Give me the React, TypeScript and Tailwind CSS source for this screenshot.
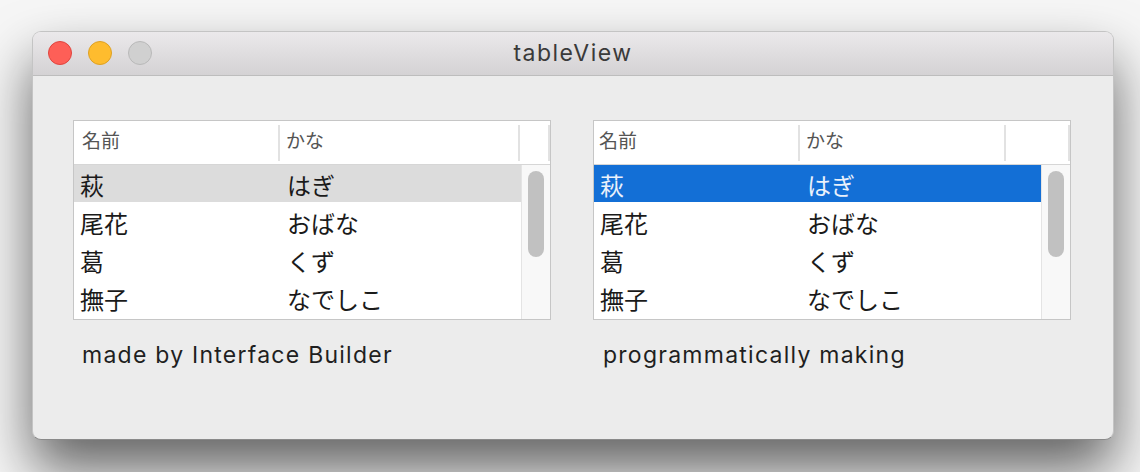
const rows = [
  { name: '萩', kana: 'はぎ' },
  { name: '尾花', kana: 'おばな' },
  { name: '葛', kana: 'くず' },
  { name: '撫子', kana: 'なでしこ' },
];

const font = { fontFamily: 'Inter, "Noto Sans CJK JP", sans-serif' };

function Table({ variant }: { variant: 'ib' | 'code' }) {
  const isCode = variant === 'code';
  return (
    <div className="w-[478px] h-[200px] border border-[#c6c6c6] bg-white flex flex-col">
      {/* header */}
      <div className="h-[44px] flex items-center border-b border-[#d6d6d6] text-[19px] text-[#555]">
        <div className={`w-[206px] h-[36px] flex items-center ${isCode ? 'pl-[5px]' : 'pl-[8px]'} border-r-2 border-[#e2e2e2]`}>
          名前
        </div>
        <div className={`${isCode ? 'w-[206px]' : 'w-[240px]'} h-[36px] flex items-center pl-[6px] border-r-2 border-[#e2e2e2]`}>
          かな
        </div>
        <div className="flex-1 h-[36px] border-r-2 border-[#e2e2e2]" />
      </div>
      {/* body */}
      <div className="flex-1 flex min-h-0">
        <div className="w-[447px] flex flex-col">
          {rows.map((r, i) => {
            const sel = i === 0;
            const bg = sel ? (isCode ? 'bg-[#136fd6] text-[#eaf1fb]' : 'bg-[#dcdcdc] text-[#1a1a1a]') : 'text-[#1a1a1a]';
            return (
              <div key={r.name} className="h-[38px] shrink-0">
                <div className={`h-[37px] flex items-center pt-[7px] text-[24px] leading-none ${bg}`}>
                  <div className="w-[207px] pl-[6px]">{r.name}</div>
                  <div className="pl-[6px]">{r.kana}</div>
                </div>
              </div>
            );
          })}
        </div>
        <div className="flex-1 bg-[#f8f8f8] border-l border-[#e4e4e4] pt-[6px] pl-[6px]">
          <div className="w-[16px] h-[86px] rounded-full bg-[#c1c1c1]" />
        </div>
      </div>
    </div>
  );
}

export default function App() {
  return (
    <div className="w-[1140px] h-[472px] bg-[#f6f6f6] pt-[31px] pl-[32px] overflow-hidden" style={font}>
      <div className="w-[1082px] h-[409px] rounded-[9px] bg-[#ececec] border border-[#c4c4c4] border-b-[#8a8a8a] shadow-[0_30px_55px_rgba(0,0,0,0.6)] overflow-hidden flex flex-col">
        {/* title bar */}
        <div className="h-[44px] shrink-0 relative flex items-center justify-center bg-gradient-to-b from-[#ebe9eb] to-[#d4d2d4] border-b border-[#bdbdbd]">
          <div className="absolute left-[15px] top-[9px] flex gap-[16px]">
            <div className="w-[24px] h-[24px] rounded-full bg-[#fe5f57] border border-[#e0443e]" />
            <div className="w-[24px] h-[24px] rounded-full bg-[#febc2e] border border-[#dea123]" />
            <div className="w-[24px] h-[24px] rounded-full bg-[#d0d0d0] border border-[#b9b9b9]" />
          </div>
          <span className="text-[23px] tracking-[1.5px] text-[#3a3a3a]">tableView</span>
        </div>
        {/* content */}
        <div className="flex gap-[42px] pl-[40px] pt-[44px]">
          <div className="flex flex-col">
            <Table variant="ib" />
            <div className="pl-[9px] pt-[18px] text-[23px] tracking-[1.25px] text-[#1f1f1f]">made by Interface Builder</div>
          </div>
          <div className="flex flex-col">
            <Table variant="code" />
            <div className="pl-[10px] pt-[18px] text-[23px] tracking-[1.25px] text-[#1f1f1f]">programmatically making</div>
          </div>
        </div>
      </div>
    </div>
  );
}
